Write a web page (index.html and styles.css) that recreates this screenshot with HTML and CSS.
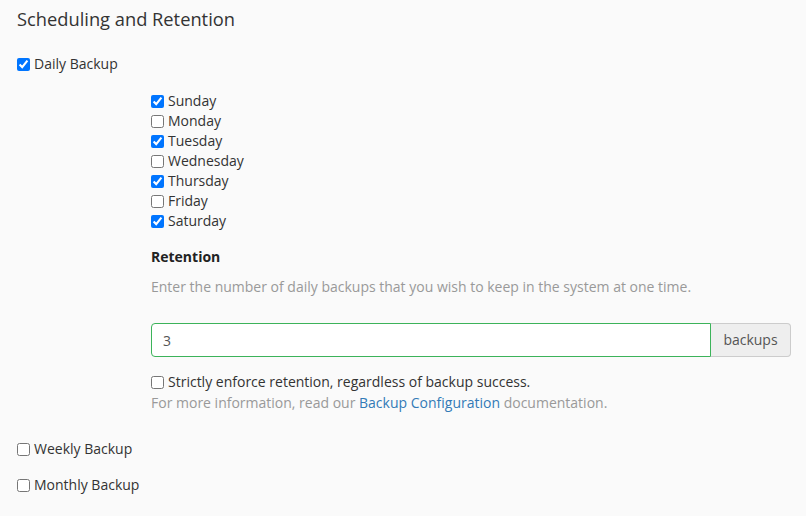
FILE: index.html
```html
<!DOCTYPE html>
<html>
<head>
<meta charset="utf-8">
<link rel="stylesheet" href="styles.css">
</head>
<body>
<div class="page">
  <h2 class="title">Scheduling and Retention</h2>
  <label class="check top daily"><input type="checkbox" checked> Daily Backup</label>
  <div class="inner">
    <div class="days">
      <label class="check"><input type="checkbox" checked> Sunday</label>
      <label class="check"><input type="checkbox"> Monday</label>
      <label class="check"><input type="checkbox" checked> Tuesday</label>
      <label class="check"><input type="checkbox"> Wednesday</label>
      <label class="check"><input type="checkbox" checked> Thursday</label>
      <label class="check"><input type="checkbox"> Friday</label>
      <label class="check"><input type="checkbox" checked> Saturday</label>
    </div>
    <div class="ret-label">Retention</div>
    <div class="help">Enter the number of daily backups that you wish to keep in the system at one time.</div>
    <div class="group">
      <input class="field" type="text" value="3">
      <span class="addon">backups</span>
    </div>
    <label class="check strict"><input type="checkbox"> Strictly enforce retention, regardless of backup success.</label>
    <div class="help info">For more information, read our <a href="#">Backup Configuration</a> documentation.</div>
  </div>
  <label class="check top weekly"><input type="checkbox"> Weekly Backup</label>
  <label class="check top monthly"><input type="checkbox"> Monthly Backup</label>
</div>
</body>
</html>
```

FILE: styles.css
```css
html, body {
  margin: 0;
  padding: 0;
  background: #fafafa;
}
body {
  font-family: "Open Sans", "DejaVu Sans", sans-serif;
  font-size: 14px;
  line-height: 20px;
  color: #333;
}
.page {
  padding: 0 15px 0 17px;
}
.title {
  margin: 5px 0 0;
  font-size: 18.3px;
  line-height: 28px;
  font-weight: 400;
  color: #333;
}
.check {
  display: flex;
  align-items: center;
  gap: 4px;
  height: 20px;
  white-space: nowrap;
}
.check input {
  margin: 0;
  width: 13px;
  height: 13px;
}
.daily { margin-top: 21px; }
.inner {
  margin-left: 134px;
}
.days {
  margin-top: 17px;
}
.ret-label {
  margin-top: 16px;
  font-weight: 700;
  color: #222;
}
.help {
  color: #999;
}
.ret-label + .help {
  margin-top: 10px;
}
.group {
  margin-top: 26px;
  display: flex;
  height: 34px;
}
.field {
  flex: 1;
  box-sizing: border-box;
  height: 34px;
  margin: 0;
  border: 1px solid #3cb35a;
  border-radius: 4px 0 0 4px;
  padding: 0 11px;
  background: #fff;
  font-family: inherit;
  font-size: 14px;
  color: #555;
  outline: none;
}
.addon {
  box-sizing: border-box;
  width: 80px;
  height: 34px;
  display: flex;
  align-items: center;
  justify-content: center;
  background: #eee;
  border: 1px solid #ccc;
  border-left: 0;
  border-radius: 0 4px 4px 0;
  color: #555;
}
.strict {
  margin-top: 15px;
}
.info {
  margin-top: 1px;
}
.help a {
  color: #337ab7;
  text-decoration: none;
}
.weekly { margin-top: 26px; }
.monthly { margin-top: 16px; }
```
